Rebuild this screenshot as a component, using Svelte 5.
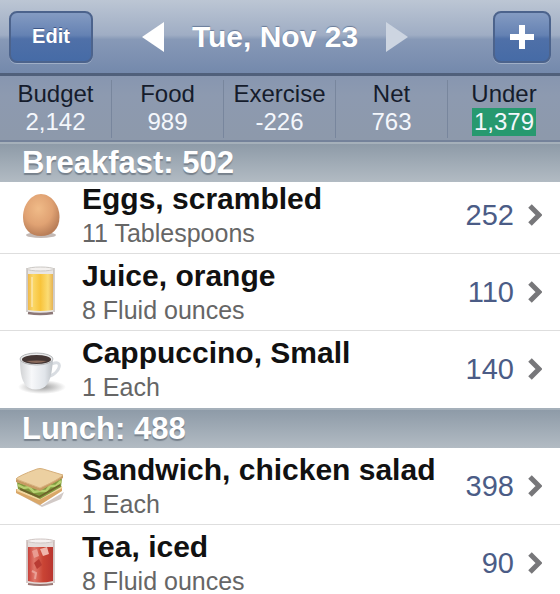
<script>
  const totals = [
    { label: 'Budget', value: '2,142' },
    { label: 'Food', value: '989' },
    { label: 'Exercise', value: '-226' },
    { label: 'Net', value: '763' },
    { label: 'Under', value: '1,379', good: true }
  ];

  const meals = [
    {
      name: 'Breakfast',
      total: 502,
      scrolled: true,
      items: [
        { icon: 'egg', name: 'Eggs, scrambled', amount: '11 Tablespoons', calories: 252 },
        { icon: 'juice', name: 'Juice, orange', amount: '8 Fluid ounces', calories: 110 },
        { icon: 'coffee', name: 'Cappuccino, Small', amount: '1 Each', calories: 140 }
      ]
    },
    {
      name: 'Lunch',
      total: 488,
      items: [
        { icon: 'sandwich', name: 'Sandwich, chicken salad', amount: '1 Each', calories: 398 },
        { icon: 'tea', name: 'Tea, iced', amount: '8 Fluid ounces', calories: 90 }
      ]
    }
  ];
</script>

{#snippet foodIcon(kind)}
  <svg class="icon" viewBox="0 0 80 76" aria-hidden="true">
    {#if kind === 'egg'}
      <defs>
        <radialGradient id="eggShell" cx="42%" cy="35%" r="65%">
          <stop offset="0" stop-color="#f0bb88" />
          <stop offset="0.6" stop-color="#e0a273" />
          <stop offset="1" stop-color="#b97e58" />
        </radialGradient>
      </defs>
      <ellipse cx="41" cy="58" rx="15" ry="3" fill="#9b8b83" opacity="0.6" />
      <path d="M41 17C51 17 59.500 28 59.500 40C59.500 52 52 59 41 59S23 52 23 40C23 28 31 17 41 17Z" fill="url(#eggShell)" />
    {:else if kind === 'juice'}
      <defs>
        <linearGradient id="juiceFill">
          <stop offset="0" stop-color="#efb84a" />
          <stop offset="0.2" stop-color="#fbd868" />
          <stop offset="0.5" stop-color="#f8c43c" />
          <stop offset="0.8" stop-color="#fbdc74" />
          <stop offset="1" stop-color="#e5b355" />
        </linearGradient>
      </defs>
      <path d="M27 14H54L53 59Q40 62 28 59Z" fill="#e9e6e4" />
      <path d="M28 20H53V56Q40 58 28 56Z" fill="url(#juiceFill)" />
      <path d="M27 14V58M54 14V58" stroke="#aaa29c" stroke-width="1" />
      <ellipse cx="40.500" cy="15" rx="13" ry="2" fill="#f4f1ef" stroke="#cbc8c4" stroke-width="1" />
      <path d="M28 59Q40 61 53 59" fill="none" stroke="#8b7777" stroke-width="2.500" />
      <path d="M32 23V53" stroke="#fff" stroke-width="2" opacity="0.35" />
    {:else if kind === 'coffee'}
      <defs>
        <linearGradient id="cupSide">
          <stop offset="0" stop-color="#d0d2d4" />
          <stop offset="0.35" stop-color="#f7f8fa" />
          <stop offset="0.75" stop-color="#e1e5ea" />
          <stop offset="1" stop-color="#bcc1c6" />
        </linearGradient>
        <radialGradient id="cupShadow">
          <stop offset="0" stop-color="#777" stop-opacity="0.75" />
          <stop offset="1" stop-color="#777" stop-opacity="0" />
        </radialGradient>
      </defs>
      <ellipse cx="42" cy="56" rx="24" ry="7" fill="url(#cupShadow)" />
      <path d="M52 33C60 29 61 35 57 40C55 43 51 45 49 45" fill="none" stroke="#d9dde2" stroke-width="3" />
      <path d="M20 28C20 43 22 53 29 57Q36 60 43 57C50 53 52 43 53 28Z" fill="url(#cupSide)" />
      <ellipse cx="36.500" cy="28" rx="16.500" ry="6" fill="#e9eaeb" stroke="#b4b6b8" stroke-width="1" />
      <ellipse cx="36.500" cy="28.500" rx="14.500" ry="4.500" fill="#443634" />
      <path d="M26 30Q36 34 47 30Q37 29 26 30Z" fill="#8a6a5c" />
    {:else if kind === 'sandwich'}
      <path d="M17 45L42 57L64 44L61 51L42 59Z" fill="#8d7770" opacity="0.4" />
      <path d="M16 41L39 50L62 38V43L40 57L16 45Z" fill="#d9a768" />
      <path d="M17 42L39 51L62 39" fill="none" stroke="#f3d6a1" stroke-width="2" />
      <path d="M17 34L40 42L62 30L61 39L40 51L18 41Z" fill="#7f9a3d" />
      <path d="M18 37L24 40L29 39L34 44L40 43L46 43L50 38L56 38L61 33" fill="none" stroke="#b8d070" stroke-width="2.500" />
      <path d="M20 41L39 49L60 37" fill="none" stroke="#6f632b" stroke-width="2" />
      <path d="M16 31L40 40L63 27V30L40 43L16 34Z" fill="#c79a62" />
      <path d="M16 31Q18 28 37 21Q40 20 43 21L63 27Q60 31 40 40Z" fill="#ecd0a1" stroke="#d6af7b" stroke-width="1" />
    {:else}
      <defs>
        <linearGradient id="teaFill">
          <stop offset="0" stop-color="#c8413a" />
          <stop offset="0.25" stop-color="#df776a" />
          <stop offset="0.6" stop-color="#ca4434" />
          <stop offset="1" stop-color="#b9352f" />
        </linearGradient>
      </defs>
      <path d="M27 15H54L53 59Q40 62 28 59Z" fill="#e5dddb" />
      <path d="M28 22H53V56Q40 59 28 56Z" fill="url(#teaFill)" />
      <path d="M40 24L47 22L49 29L43 31Z" fill="#f0b5ab" />
      <path d="M32 26L37 24L39 31L34 33Z" fill="#e99b90" />
      <path d="M34 38L39 34L42 40L37 44Z" fill="#b83b33" />
      <path d="M32 46L36 48L35 54" fill="none" stroke="#eaa096" stroke-width="2" />
      <path d="M27 15V58M54 15V58" stroke="#b29a97" stroke-width="1" />
      <ellipse cx="40.500" cy="16" rx="13" ry="2" fill="#f6f1f0" stroke="#cfc5c3" stroke-width="1" />
      <path d="M28 59Q40 61 53 59" fill="none" stroke="#9b7773" stroke-width="2" />
    {/if}
  </svg>
{/snippet}

<div class="app">
  <header>
    <button class="tool edit" type="button">Edit</button>
    <nav aria-label="Day">
      <button class="arrow" type="button" aria-label="Previous day">
        <svg viewBox="0 0 22 30"><path d="M22 0V30L0 15Z" fill="#fff" /></svg>
      </button>
      <h1>Tue, Nov 23</h1>
      <button class="arrow" type="button" aria-label="Next day">
        <svg viewBox="0 0 22 30"><path d="M0 0V30L22 15Z" fill="#cdd5e1" /></svg>
      </button>
    </nav>
    <button class="tool add" type="button" aria-label="Add food">
      <svg viewBox="0 0 24 24"><path d="M12 0V24M0 12H24" stroke="#fff" stroke-width="6" /></svg>
    </button>
  </header>

  <dl class="totals">
    {#each totals as t}
      <div>
        <dt>{t.label}</dt>
        <dd><span class:good={t.good}>{t.value}</span></dd>
      </div>
    {/each}
  </dl>

  <main>
    {#each meals as meal}
      <section class:scrolled={meal.scrolled}>
        <h2>{meal.name}: {meal.total}</h2>
        <ul>
          {#each meal.items as item}
            <li>
              <a href="#{item.icon}">
                {@render foodIcon(item.icon)}
                <span class="text">
                  <span class="name">{item.name}</span>
                  <span class="amount">{item.amount}</span>
                </span>
                <span class="calories">{item.calories}</span>
                <svg class="chevron" viewBox="0 0 14 22" aria-hidden="true">
                  <path d="M2 2L11 11L2 20" fill="none" stroke="#77777a" stroke-width="5" />
                </svg>
              </a>
            </li>
          {/each}
        </ul>
      </section>
    {/each}
  </main>
</div>

<style>
  :global(body) {
    margin: 0;
  }

  .app {
    display: flex;
    flex-direction: column;
    height: 100vh;
    background: #fff;
    font-family: 'Liberation Sans', Arial, sans-serif;
  }

  h1,
  h2,
  ul,
  dl,
  dd {
    margin: 0;
    padding: 0;
  }

  svg {
    display: block;
  }

  header {
    display: flex;
    align-items: center;
    box-sizing: border-box;
    flex: none;
    height: 76px;
    padding: 0 9px;
    background: linear-gradient(#bcc6d4 0, #9fadc4 48%, #8799b7 54%, #7489ac 100%);
    border-bottom: 3px solid #50607b;
  }

  button {
    padding: 0;
    border: 0;
    background: none;
    font: inherit;
  }

  .tool {
    display: flex;
    align-items: center;
    justify-content: center;
    box-sizing: border-box;
    height: 52px;
    border: 2px solid #4c638c;
    border-radius: 8px;
    background: linear-gradient(#849bc2 0, #6582b3 46%, #4f70a8 54%, #466ba6 100%);
    box-shadow: 0 1px 0 #a0afc7;
    color: #fff;
    font-size: 20px;
    font-weight: bold;
    text-shadow: 0 -1px 0 #3c5688;
  }

  .edit {
    width: 84px;
  }

  .add {
    width: 58px;
  }

  .add svg {
    width: 24px;
    height: 24px;
  }

  nav {
    display: flex;
    flex: 1;
    align-items: center;
    justify-content: center;
    gap: 28px;
    padding-right: 36px;
  }

  .arrow svg {
    width: 22px;
    height: 30px;
  }

  h1 {
    color: #fff;
    font-size: 30px;
    line-height: 36px;
    white-space: nowrap;
    text-shadow: 0 -1px 1px #6a7c99;
  }

  .totals {
    display: grid;
    grid-template-columns: repeat(5, 1fr);
    flex: none;
    padding: 4px 0 2px;
    background: linear-gradient(#8796b0, #8d9ab0 30%, #8d99ab);
    border-bottom: 2px solid #74829a;
    text-align: center;
    font-size: 24px;
    line-height: 28px;
  }

  .totals div {
    padding-bottom: 2px;
    border-right: 1px solid #78869d;
  }

  .totals div:last-child {
    border-right: 0;
  }

  dt {
    color: #151c2c;
  }

  dd {
    color: #f4f7fc;
  }

  dd span {
    display: inline-block;
    padding: 0 2px;
  }

  .good {
    background: #27996f;
  }

  main {
    flex: 1;
    min-height: 0;
    overflow-y: auto;
    scrollbar-width: none;
  }

  h2 {
    position: relative;
    z-index: 1;
    box-sizing: border-box;
    height: 40px;
    padding: 0 22px;
    border-top: 2px solid #a5b0ba;
    background: linear-gradient(#8e9ba8, #b2bbc3);
    color: #fff;
    font-size: 31px;
    line-height: 38px;
    text-shadow: 0 2px 1px #77818c;
  }

  ul {
    list-style: none;
  }

  /* The pinned meal heading covers the top of its first row. */
  .scrolled ul {
    margin-top: -5px;
  }

  li {
    border-bottom: 1px solid #dedede;
  }

  .scrolled li:last-child {
    border-bottom-color: #fff;
  }

  a {
    display: flex;
    align-items: center;
    height: 76px;
    padding-right: 18px;
    color: inherit;
    text-decoration: none;
  }

  .icon {
    flex: none;
    width: 80px;
    height: 76px;
  }

  .text {
    display: flex;
    flex: 1;
    flex-direction: column;
    min-width: 0;
    padding: 2px 0 0 2px;
    white-space: nowrap;
  }

  .name {
    color: #111;
    font-size: 30px;
    font-weight: bold;
    line-height: 34px;
  }

  .amount {
    color: #666;
    font-size: 25px;
    line-height: 34px;
  }

  .calories {
    color: #4b5c86;
    font-size: 29px;
  }

  .chevron {
    width: 14px;
    height: 22px;
    margin-left: 14px;
  }
</style>
